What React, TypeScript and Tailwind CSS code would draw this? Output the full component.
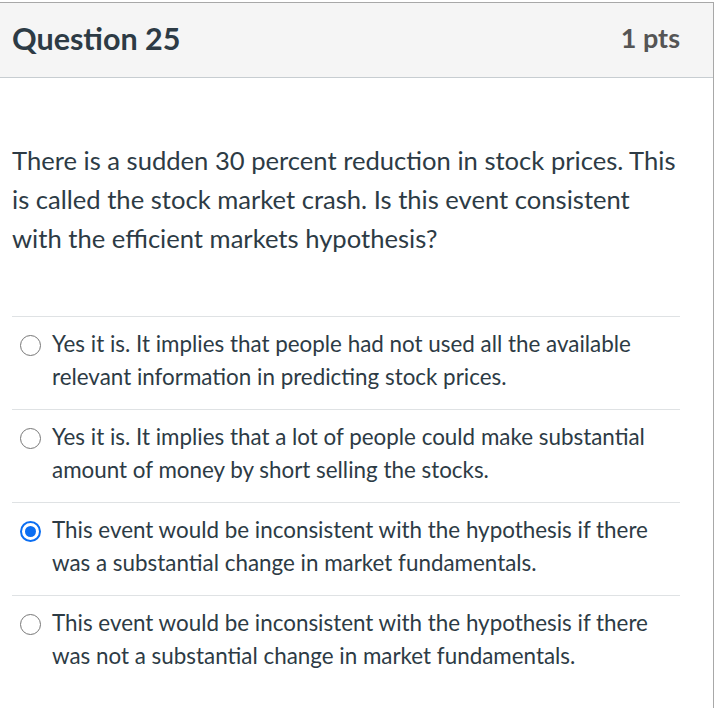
import React from 'react'

const answers = [
  {
    text: 'Yes it is. It implies that people had not used all the available relevant information in predicting stock prices.',
    selected: false,
  },
  {
    text: 'Yes it is. It implies that a lot of people could make substantial amount of money by short selling the stocks.',
    selected: false,
  },
  {
    text: 'This event would be inconsistent with the hypothesis if there was a substantial change in market fundamentals.',
    selected: true,
  },
  {
    text: 'This event would be inconsistent with the hypothesis if there was not a substantial change in market fundamentals.',
    selected: false,
  },
]

function Radio({ checked }: { checked: boolean }) {
  if (checked) {
    return (
      <span className="flex h-[21px] w-[21px] items-center justify-center rounded-full border-[2px] border-[#0b6ef2] bg-white">
        <span className="block h-[11px] w-[11px] rounded-full bg-[#0b6ef2]" />
      </span>
    )
  }
  return <span className="block h-[21px] w-[21px] rounded-full border-[1.5px] border-[#777] bg-white" />
}

export default function App() {
  return (
    <div className="min-h-screen bg-white pt-[2px] font-['Lato','Open_Sans',sans-serif]">
      <div className="w-[714px] border-t border-r border-[#a8a8a8] min-h-[706px]">
        <div className="flex h-[75px] items-center justify-between border-b border-[#c7cdd1] bg-[#f5f5f5] px-[12px] pb-[3px]">
          <h2 className="text-[30.5px] font-bold text-[#2d3b45]">Question 25</h2>
          <div className="pr-[21px] text-[27px] font-bold text-[#555]">1 pts</div>
        </div>

        <div className="px-[12px]">
          <p className="pt-[63px] pr-[24px] text-[25.6px] leading-[39px] text-[#2d3b45]">
            There is a sudden 30 percent reduction in stock prices. This is called the stock market crash. Is this event consistent with the efficient markets hypothesis?
          </p>

          <div className="mt-[58px] mr-[21px]">
            {answers.map((a, i) => (
              <div key={i} className="flex h-[93px] gap-[11px] border-t border-[#dfe2e4] pt-[10px] pl-[8px]">
                <div className="shrink-0 pt-[8px]">
                  <Radio checked={a.selected} />
                </div>
                <div className="text-[22.4px] leading-[33px] text-[#2d3b45]">{a.text}</div>
              </div>
            ))}
          </div>
        </div>
      </div>
    </div>
  )
}
